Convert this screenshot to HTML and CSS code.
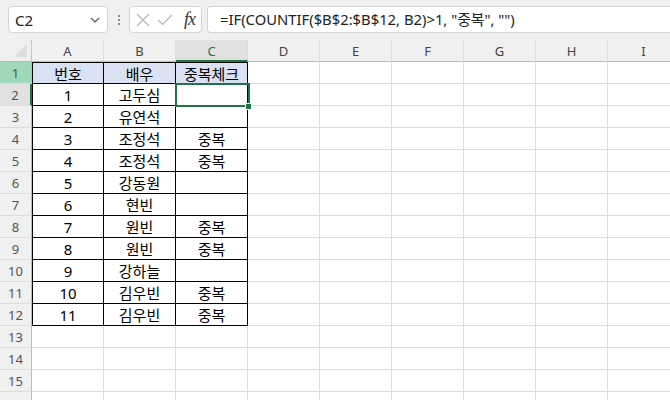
FILE: index.html
```html
<!DOCTYPE html>
<html lang="ko">
<head>
<meta charset="utf-8">
<title>중복체크</title>
<link rel="stylesheet" href="styles.css">
</head>
<body>
<div class="toolbar">
	<div class="namebox">
		<span>C2</span>
		<svg class="chev" width="10" height="6" viewBox="0 0 10 6"><polyline points="1,1 5,5 9,1" fill="none" stroke="#555" stroke-width="1.2"/></svg>
	</div>
	<div class="grip"><i></i><i></i><i></i></div>
	<div class="fxbox">
		<svg width="14" height="14" viewBox="0 0 14 14"><path d="M1 1 L13 13 M13 1 L1 13" stroke="#b4b4b4" stroke-width="1.2"/></svg>
		<svg width="16" height="12" viewBox="0 0 16 12"><polyline points="1,6 5.5,10.5 15,1" fill="none" stroke="#b4b4b4" stroke-width="1.2"/></svg>
		<span class="fx">fx</span>
	</div>
	<div class="formula">=IF(COUNTIF($B$2:$B$12, B2)&gt;1, "중복", "")</div>
</div>

<div class="sheet">
	<div class="grid">
		<div class="corner"><i></i></div>
		<div class="ch">A</div><div class="ch">B</div><div class="ch sel-col">C</div><div class="ch">D</div><div class="ch">E</div><div class="ch">F</div><div class="ch">G</div><div class="ch">H</div><div class="ch">I</div>

		<div class="rh hl">1</div>
		<div class="t a top head">번호</div><div class="t top head">배우</div><div class="t top head">중복체크</div>
		<div class="c"></div><div class="c"></div><div class="c"></div><div class="c"></div><div class="c"></div><div class="c"></div>

		<div class="rh sel-row">2</div>
		<div class="t a">1</div><div class="t">고두심</div><div class="t"></div>
		<div class="c"></div><div class="c"></div><div class="c"></div><div class="c"></div><div class="c"></div><div class="c"></div>

		<div class="rh">3</div>
		<div class="t a">2</div><div class="t">유연석</div><div class="t"></div>
		<div class="c"></div><div class="c"></div><div class="c"></div><div class="c"></div><div class="c"></div><div class="c"></div>

		<div class="rh">4</div>
		<div class="t a">3</div><div class="t">조정석</div><div class="t">중복</div>
		<div class="c"></div><div class="c"></div><div class="c"></div><div class="c"></div><div class="c"></div><div class="c"></div>

		<div class="rh">5</div>
		<div class="t a">4</div><div class="t">조정석</div><div class="t">중복</div>
		<div class="c"></div><div class="c"></div><div class="c"></div><div class="c"></div><div class="c"></div><div class="c"></div>

		<div class="rh">6</div>
		<div class="t a">5</div><div class="t">강동원</div><div class="t"></div>
		<div class="c"></div><div class="c"></div><div class="c"></div><div class="c"></div><div class="c"></div><div class="c"></div>

		<div class="rh">7</div>
		<div class="t a">6</div><div class="t">현빈</div><div class="t"></div>
		<div class="c"></div><div class="c"></div><div class="c"></div><div class="c"></div><div class="c"></div><div class="c"></div>

		<div class="rh">8</div>
		<div class="t a">7</div><div class="t">원빈</div><div class="t">중복</div>
		<div class="c"></div><div class="c"></div><div class="c"></div><div class="c"></div><div class="c"></div><div class="c"></div>

		<div class="rh">9</div>
		<div class="t a">8</div><div class="t">원빈</div><div class="t">중복</div>
		<div class="c"></div><div class="c"></div><div class="c"></div><div class="c"></div><div class="c"></div><div class="c"></div>

		<div class="rh">10</div>
		<div class="t a">9</div><div class="t">강하늘</div><div class="t"></div>
		<div class="c"></div><div class="c"></div><div class="c"></div><div class="c"></div><div class="c"></div><div class="c"></div>

		<div class="rh">11</div>
		<div class="t a">10</div><div class="t">김우빈</div><div class="t">중복</div>
		<div class="c"></div><div class="c"></div><div class="c"></div><div class="c"></div><div class="c"></div><div class="c"></div>

		<div class="rh">12</div>
		<div class="t a">11</div><div class="t">김우빈</div><div class="t">중복</div>
		<div class="c"></div><div class="c"></div><div class="c"></div><div class="c"></div><div class="c"></div><div class="c"></div>

		<div class="rh">13</div>
		<div class="c"></div><div class="c"></div><div class="c"></div><div class="c"></div><div class="c"></div><div class="c"></div><div class="c"></div><div class="c"></div><div class="c"></div>
		<div class="rh">14</div>
		<div class="c"></div><div class="c"></div><div class="c"></div><div class="c"></div><div class="c"></div><div class="c"></div><div class="c"></div><div class="c"></div><div class="c"></div>
		<div class="rh">15</div>
		<div class="c"></div><div class="c"></div><div class="c"></div><div class="c"></div><div class="c"></div><div class="c"></div><div class="c"></div><div class="c"></div><div class="c"></div>
		<!-- row 16 only peeks in at the bottom edge -->
		<div class="rh"></div>
		<div class="c"></div><div class="c"></div><div class="c"></div><div class="c"></div><div class="c"></div><div class="c"></div><div class="c"></div><div class="c"></div><div class="c"></div>
	</div>

	<!-- active cell C2 -->
	<div class="active"></div>
	<div class="handle"></div>
</div>
</body>
</html>
```

FILE: styles.css
```css
html, body{
	margin: 0;
	padding: 0;
	background: #f0f0f0;
	font-family: "Noto Sans", "Noto Sans CJK KR", sans-serif;
	overflow: hidden;
}

.toolbar{
	height: 40px;
	display: flex;
	align-items: flex-start;
	padding-top: 6px;
	box-sizing: border-box;
}

.namebox{
	margin-left: 8px;
	width: 100px;
	height: 27px;
	box-sizing: border-box;
	background: #fff;
	border: 1px solid #d4d4d4;
	border-radius: 4px;
	display: flex;
	align-items: center;
	justify-content: space-between;
	padding: 0 7px 0 6px;
	font-size: 15px;
	color: #222;
}

.grip{
	width: 21px;
	height: 27px;
	display: flex;
	flex-direction: column;
	align-items: center;
	justify-content: center;
	gap: 2px;
}
.grip i{
	display: block;
	width: 2px;
	height: 2px;
	background: #8a8a8a;
}

.fxbox{
	width: 73px;
	height: 27px;
	box-sizing: border-box;
	background: #fff;
	border: 1px solid #d4d4d4;
	border-radius: 4px;
	display: flex;
	align-items: center;
	padding-left: 6px;
	gap: 7px;
}
.fx{
	font-family: "Liberation Serif", serif;
	font-style: italic;
	font-size: 18px;
	color: #333;
	margin-left: 4px;
	letter-spacing: -1px;
}

.formula{
	margin-left: 5px;
	flex: 1;
	height: 27px;
	box-sizing: border-box;
	background: #fff;
	border: 1px solid #d4d4d4;
	border-right: none;
	border-radius: 4px 0 0 4px;
	padding-left: 12px;
	line-height: 25px;
	font-size: 14.8px;
	color: #222;
	white-space: nowrap;
}

.sheet{
	position: relative;
	height: 360px;
	overflow: hidden;
	background: #fff;
}

.grid{
	display: grid;
	grid-template-columns: 32px repeat(9, 72px);
	grid-auto-rows: 22px;
	font-size: 15px;
	color: #000;
}
.grid > div{
	box-sizing: border-box;
	display: flex;
	align-items: center;
	justify-content: center;
}

.corner{
	position: relative;
	background: #f0f0f0;
	border-right: 1px solid #c6c6c6;
	border-bottom: 1px solid #bababa;
}
.corner i{
	position: absolute;
	right: 4px;
	bottom: 4px;
	width: 0;
	height: 0;
	border-left: 13px solid transparent;
	border-bottom: 13px solid #dedede;
}

.ch{
	background: #f0f0f0;
	border-right: 1px solid #dcdcdc;
	border-bottom: 1px solid #bababa;
	font-size: 13px;
	color: #444;
	padding-top: 1px;
}
.ch.sel-col{
	background: #e1e1e1;
	color: #217346;
	border-bottom: 2px solid #217346;
}

.rh{
	background: #f0f0f0;
	border-right: 1px solid #bababa;
	border-bottom: 1px solid #dcdcdc;
	font-size: 13px;
	color: #555;
}
.rh.hl{
	background: #a0d8b9;
	color: #3d5a48;
}
.rh.sel-row{
	background: #e1e1e1;
	border-right: 2px solid #217346;
}

.c{
	border-right: 1px solid #dedede;
	border-bottom: 1px solid #dedede;
}

.t{
	border-right: 1px solid #000;
	border-bottom: 1px solid #000;
}
.t.a{
	border-left: 1px solid #000;
}
.t.top{
	border-top: 1px solid #000;
}
.t.head{
	background: #d9e1f2;
}

/* active cell outline sits over the grid */
.active{
	position: absolute;
	left: 175px;
	top: 43px;
	width: 75px;
	height: 24px;
	box-sizing: border-box;
	border: 2px solid #217346;
}
.handle{
	position: absolute;
	left: 245px;
	top: 63px;
	width: 5px;
	height: 5px;
	background: #217346;
	border: 1px solid #fff;
}
```
